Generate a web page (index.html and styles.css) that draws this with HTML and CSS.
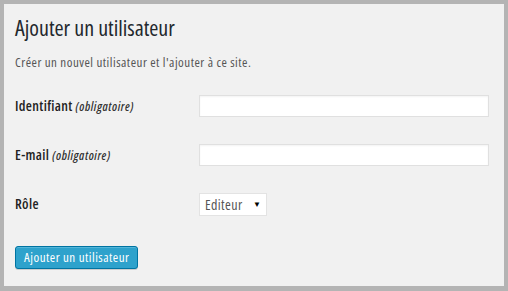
FILE: index.html
```html
<!DOCTYPE html>
<html lang="fr">
<head>
    <meta charset="UTF-8">
    <meta name="viewport" content="width=device-width, initial-scale=1.0">
    <title>Ajouter un utilisateur</title>
    <link rel="stylesheet" href="styles.css">
</head>
<body>
    <div class="wrap">
        <h1>Ajouter un utilisateur</h1>
        <p class="intro">Créer un nouvel utilisateur et l'ajouter à ce site.</p>

        <form class="user-form" onsubmit="return false">
            <div class="form-row">
                <label for="user-login">Identifiant <span class="required">(obligatoire)</span></label>
                <input type="text" id="user-login">
            </div>

            <div class="form-row">
                <label for="email">E-mail <span class="required">(obligatoire)</span></label>
                <input type="text" id="email">
            </div>

            <div class="form-row">
                <label for="role">Rôle</label>
                <span class="select-wrap">
                    <select id="role">
                        <option value="editor">Editeur</option>
                        <option value="author">Auteur</option>
                        <option value="subscriber">Abonné</option>
                    </select>
                </span>
            </div>

            <button type="submit" class="button-primary">Ajouter un utilisateur</button>
        </form>
    </div>
</body>
</html>
```

FILE: styles.css
```css
:root {
    --frame: #b4b4b4;
    --bg-color: #f1f1f1;
    --text: #23282d;
    --muted: #555;
    --blue: #2ea2cc;
    --blue-dark: #0074a2;
}

html, body {
    margin: 0;
    height: 100%;
}

body {
    font-family: 'Open Sans', 'Noto Sans', sans-serif;
    font-stretch: condensed;
    background-color: var(--bg-color);
    color: var(--text);
    box-sizing: border-box;
    border: 4px solid var(--frame);
    border-bottom-width: 5px;
}

.wrap {
    padding: 10px 11px 0;
}

h1 {
    margin: 0;
    font-size: 22px;
    font-weight: 400;
    line-height: 27px;
    color: var(--text);
}

.intro {
    margin: 12px 0 0;
    font-size: 13px;
    letter-spacing: 0.5px;
    line-height: 18px;
    color: var(--muted);
}

.user-form {
    margin-top: 11px;
}

.form-row {
    display: flex;
    align-items: flex-start;
    height: 49px;
    padding-top: 13px;
    box-sizing: border-box;
}

label {
    width: 184px;
    flex-shrink: 0;
    font-size: 14px;
    font-weight: 600;
    letter-spacing: 0.35px;
    line-height: 22px;
    color: #222;
}

.required {
    font-size: 12px;
    font-style: italic;
    font-weight: 600;
    letter-spacing: 0.6px;
    color: #333;
}

input[type="text"] {
    width: 290px;
    height: 22px;
    margin: 0;
    padding: 2px 5px;
    box-sizing: border-box;
    border: 1px solid #e0e0e0;
    background: white;
    box-shadow: inset 0 1px 2px rgba(0, 0, 0, 0.05);
    font-family: inherit;
    font-size: 13px;
}

.select-wrap {
    position: relative;
    display: inline-block;
}

.select-wrap::after {
    content: '\25BC';
    position: absolute;
    right: 6px;
    top: 6px;
    font-size: 8px;
    line-height: 10px;
    color: #000;
    pointer-events: none;
}

select {
    appearance: none;
    -webkit-appearance: none;
    width: 68px;
    height: 23px;
    margin: 0;
    padding: 0 0 0 5px;
    border: 1px solid #e3e3e3;
    border-radius: 0;
    background: white;
    font-family: inherit;
    font-stretch: condensed;
    font-size: 14px;
    letter-spacing: 0.4px;
    color: var(--muted);
}

.button-primary {
    margin-top: 17px;
    height: 23px;
    padding: 0 8px;
    border: 1px solid var(--blue-dark);
    border-radius: 3px;
    background-color: var(--blue);
    box-shadow: inset 0 1px 0 rgba(120, 200, 230, 0.5), 0 1px 0 rgba(0, 0, 0, 0.15);
    color: white;
    font-family: inherit;
    font-stretch: condensed;
    font-size: 13px;
    letter-spacing: 0.5px;
    line-height: 21px;
    cursor: pointer;
}

.button-primary:hover {
    background-color: #1e8cbe;
}
```
